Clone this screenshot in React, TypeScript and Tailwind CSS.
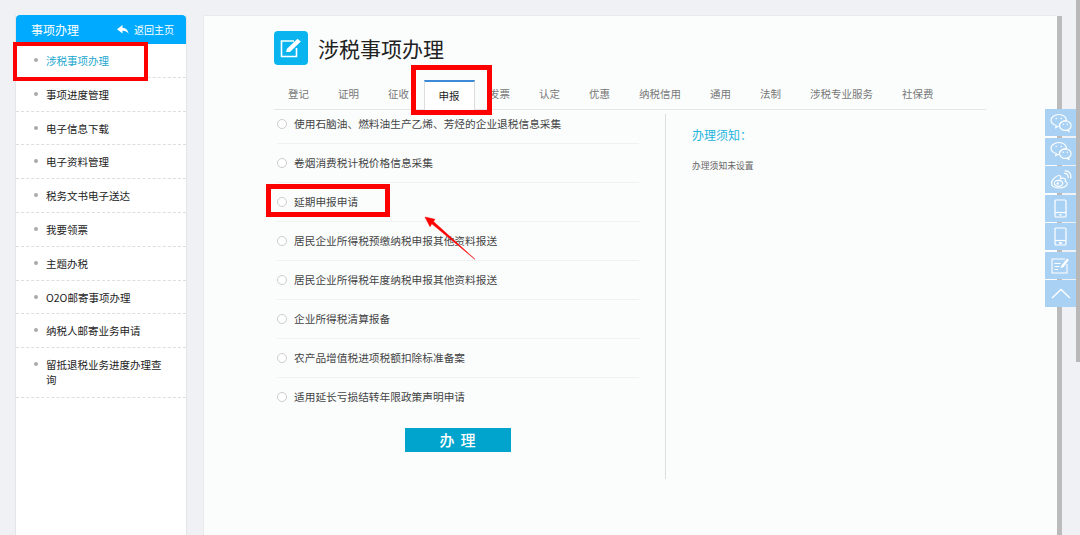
const font = { fontFamily: '"Noto Sans CJK SC", "Liberation Sans", sans-serif' };

const menu = [
	"涉税事项办理",
	"事项进度管理",
	"电子信息下载",
	"电子资料管理",
	"税务文书电子送达",
	"我要领票",
	"主题办税",
	"O2O邮寄事项办理",
	"纳税人邮寄业务申请",
	"留抵退税业务进度办理查询",
];

const tabs = ["登记", "证明", "征收", "申报", "发票", "认定", "优惠", "纳税信用", "通用", "法制", "涉税专业服务", "社保费"];

const items = [
	"使用石脑油、燃料油生产乙烯、芳烃的企业退税信息采集",
	"卷烟消费税计税价格信息采集",
	"延期申报申请",
	"居民企业所得税预缴纳税申报其他资料报送",
	"居民企业所得税年度纳税申报其他资料报送",
	"企业所得税清算报备",
	"农产品增值税进项税额扣除标准备案",
	"适用延长亏损结转年限政策声明申请",
];

function WechatIcon() {
	return (
		<svg width="24" height="20" viewBox="0 0 24 20" fill="none" stroke="white" strokeWidth="1.1">
			<path d="M10 1.5c4.2 0 7.4 2.6 7.4 5.7 0 .4 0 .6-.1.9-3.800-.6-7 1.700-6.800 5l-1.200.1-2.600 1.500.5-2.200C4 11.500 2 9.500 2 7.200 2 4.100 5.500 1.500 10 1.500z" />
			<ellipse cx="16.300" cy="12.600" rx="5.800" ry="4.800" />
			<path d="M19.500 16.600l.5 1.900-2.200-1.200" />
			<circle cx="7.200" cy="5.500" r=".8" fill="white" stroke="none" />
			<circle cx="12.300" cy="5.500" r=".8" fill="white" stroke="none" />
			<circle cx="14.300" cy="11.300" r=".7" fill="white" stroke="none" />
			<circle cx="18.300" cy="11.300" r=".7" fill="white" stroke="none" />
		</svg>
	);
}

function WeiboIcon() {
	return (
		<svg width="22" height="20" viewBox="0 0 22 20" fill="none" stroke="white" strokeWidth="1.2">
			<path d="M9 18c-4 0-7.500-1.800-7.500-4.800 0-3.200 4.800-7.700 7.700-7.700 1.800 0 1.800 1.800 1.300 3.200 2-.8 5-.9 5 1.300 0 .6-.1.900-.3 1.200 1.200.4 2 1.200 2 2.500 0 2.500-3.700 4.300-8.200 4.300z" />
			<ellipse cx="8.500" cy="13.300" rx="4.200" ry="3" />
			<circle cx="7.800" cy="13.500" r="1.200" fill="white" stroke="none" />
			<path d="M14 3.500c2.500-.6 4.800 1.500 4 4.500M14.500 1c4-.8 7.500 2.800 6 7.500" />
		</svg>
	);
}

function PhoneIcon({ cross }: { cross?: boolean }) {
	return (
		<svg width="13" height="19" viewBox="0 0 13 19" fill="none" stroke="white" strokeWidth="1.2">
			<rect x="1" y="1" width="11" height="17" rx="1" />
			<path d="M1 13.500h11" />
			<rect x={cross ? 5.200 : 5.500} y="15" width={cross ? 2.600 : 2} height={cross ? 2 : 1.600} fill="white" stroke="none" />
		</svg>
	);
}

function NoteIcon() {
	return (
		<svg width="19" height="18" viewBox="0 0 19 18" fill="none" stroke="white" strokeWidth="1.100">
			<path d="M14 3H1v14h15V8" />
			<path d="M3.500 7.500h6M3.500 10.500h5M3.500 13.500h3.500" />
			<path d="M9.500 12.500l1-3L16 2.500l2 1.600-5.500 7z" fill="white" stroke="none" />
		</svg>
	);
}

function UpIcon() {
	return (
		<svg width="20" height="11" viewBox="0 0 20 11" fill="none" stroke="white" strokeWidth="1.300">
			<path d="M1 10L10 1.500 19 10" />
		</svg>
	);
}

const floatIcons = [
	<WechatIcon />,
	<WechatIcon />,
	<WeiboIcon />,
	<PhoneIcon />,
	<PhoneIcon cross />,
	<NoteIcon />,
	<UpIcon />,
];

export default function App() {
	return (
		<div style={font} className="relative flex h-[535px] w-[1080px] overflow-hidden bg-[#f0f1f4] pl-[15px] pt-[15px]">
			<aside className="mr-4 h-[540px] w-[172px] shrink-0 border-x border-[#e3e5e8] bg-white">
				<div className="flex h-[29px] items-center justify-between rounded-t-sm bg-[#00aaff] pl-[15px] pr-[12px] text-white">
					<span className="text-[12px]">事项办理</span>
					<span className="flex items-center gap-[5px] text-[10px]">
						<svg width="12" height="10" viewBox="0 0 12 10" fill="white">
							<path d="M5.500 0L0 4.200l5.500 4.200V5.800c2.800 0 4.600.6 6 3.200-.3-3.700-2.400-6-6-6.300z" />
						</svg>
						返回主页
					</span>
				</div>
				<ul>
					{menu.map((m, i) => (
						<li
							key={m}
							className={
								"flex border-b border-dashed border-[#dedede] pl-[18px] pr-[21px] text-[10.5px] leading-[15px] " +
								(i === menu.length - 1 ? "h-[50px] pt-[9px]" : "h-[33.8px] pt-[9px]") +
								(i === 0 ? " text-[#1ba8cf]" : " text-[#222]")
							}
						>
							<span className="mr-[8px] mt-[5px] h-1 w-1 shrink-0 rounded-full bg-[#aaaaaa]" />
							<span>{m}</span>
						</li>
					))}
				</ul>
			</aside>

			<main className="h-[540px] w-[854px] shrink-0 border-l border-t border-[#e8eaec] bg-[#fbfdfd] pl-[70px] pt-[15px]">
				<div className="flex items-center gap-[10px]">
					<div className="flex h-[34px] w-[34px] items-center justify-center rounded-[4px] bg-[#0ab4ee]">
						<svg width="24" height="22" viewBox="0 0 24 22" fill="none" stroke="white" strokeWidth="1.600">
							<path d="M15 4H2.500v15.500h15V11" />
							<path d="M7 15l1-3.300L18.500 1.800l3.300 2.700L11 15z" fill="white" stroke="none" />
						</svg>
					</div>
					<h1 className="text-[21px] font-normal leading-none text-[#222]">涉税事项办理</h1>
				</div>

				<div className="mt-[15px] -ml-[0.500px] flex h-[30px] w-[712.500px] border-b border-[#e6e6e6]">
					{tabs.map((t) =>
						t === "申报" ? (
							<div key={t} className="h-[30px] border-x border-t-2 border-x-[#dddddd] border-t-[#3d8ad8] bg-white px-[14px] pt-[6px] text-[10.5px] text-[#222]">
								{t}
							</div>
						) : (
							<div key={t} className="px-[14.500px] pt-[6px] text-[10.5px] text-[#777]">
								{t}
							</div>
						),
					)}
				</div>

				<div className="flex">
					<div className="-mt-[5px] ml-[3px] w-[362px]">
						{items.map((item, i) => (
							<div
								key={item}
								className={
									"flex h-[39px] items-center gap-[7px] border-b text-[10.7px] text-[#444] " +
									(i < items.length - 1 ? "border-[#f0f1f1]" : "border-transparent")
								}
							>
								<span className="h-[10px] w-[10px] shrink-0 rounded-full border border-[#cccccc] bg-white" />
								{item}
							</div>
						))}
						<button className="mx-auto mt-[11px] block h-[24px] w-[106px] bg-[#00a4cc] pl-[5px] text-[15px] font-medium tracking-[6px] text-white">
							办理
						</button>
					</div>
					<div className="ml-[26px] mt-[4px] h-[365px] border-l border-[#dddddd] pl-[26px]">
						<p className="mt-[12px] text-[12px] leading-[18px] text-[#1fb4dc]">办理须知：</p>
						<p className="mt-[15px] text-[8.8px] leading-[13px] text-[#666]">办理须知未设置</p>
					</div>
				</div>
			</main>

			<div className="mt-px h-[540px] w-[5px] shrink-0 bg-[#bbbbbb]" />

			{/* page scrollbar */}
			<div className="absolute right-0 top-0 h-[362px] w-1 bg-[#b8b8b8]" />

			{/* floating share bar */}
			<div className="absolute left-[1045px] top-[109px] flex w-[31px] flex-col gap-[1.500px]">
				{floatIcons.map((icon, i) => (
					<div key={i} className="flex h-[27px] items-center justify-center bg-[#a9d1f4]">
						{icon}
					</div>
				))}
			</div>

			{/* annotations drawn over the screenshot */}
			<div className="absolute left-[13px] top-[42px] h-[39px] w-[135px] border-4 border-[#ff0000]" />
			<div className="absolute left-[411px] top-[65px] h-[50px] w-[81px] border-[5px] border-[#ff0000]" />
			<div className="absolute left-[266px] top-[184px] h-[33px] w-[124px] border-[5px] border-[#ff0000]" />
			<svg className="absolute left-[420px] top-[210px]" width="60" height="54" viewBox="0 0 60 54">
				<path d="M5 7l10 2.300-1.500 2.200L55 49.300 11.800 13.800 10 16.700z" fill="#ff0000" stroke="#ff0000" strokeWidth="0.500" />
			</svg>
		</div>
	);
}
